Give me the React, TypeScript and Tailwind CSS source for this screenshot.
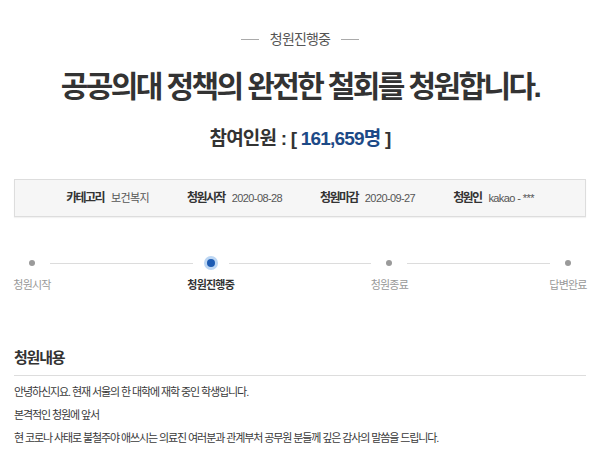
import React from 'react'

const steps = [
  { label: '청원시작', active: false },
  { label: '청원진행중', active: true },
  { label: '청원종료', active: false },
  { label: '답변완료', active: false },
]

const meta = [
  { k: '카테고리', v: '보건복지' },
  { k: '청원시작', v: '2020-08-28' },
  { k: '청원마감', v: '2020-09-27' },
  { k: '청원인', v: 'kakao - ***' },
]

const lines = [
  '안녕하신지요. 현재 서울의 한 대학에 재학 중인 학생입니다.',
  '본격적인 청원에 앞서',
  '현 코로나 사태로 불철주야 애쓰시는 의료진 여러분과 관계부처 공무원 분들께 깊은 감사의 말씀을 드립니다.',
]

function Dot({ active }: { active: boolean }) {
  if (active) {
    return (
      <div className="flex h-[14px] w-[14px] items-center justify-center rounded-full bg-[#bcd6f3]">
        <div className="h-[8px] w-[8px] rounded-full bg-[#1e5cb3]" />
      </div>
    )
  }
  return <div className="h-[6px] w-[6px] rounded-full bg-[#9a9a9a]" />
}

export default function App() {
  return (
    <div
      className="min-h-[449px] w-full bg-white px-[14px] text-[#333]"
      style={{ fontFamily: '"Liberation Sans", "Noto Sans CJK KR", sans-serif' }}
    >
      {/* status label */}
      <div className="flex items-center justify-center gap-[11px] pt-[29px]">
        <span className="h-px w-[18px] bg-[#aaa]" />
        <span className="text-[14px] leading-[20px] tracking-[-0.8px] text-[#555]">청원진행중</span>
        <span className="h-px w-[18px] bg-[#aaa]" />
      </div>

      <h1 className="mt-[20px] text-center text-[30px] font-bold leading-[36px] tracking-[-2.6px] text-[#333]">
        공공의대 정책의 완전한 철회를 청원합니다.
      </h1>

      <div className="mt-[21px] text-center text-[19px] font-bold leading-[26px] tracking-[-0.8px] text-[#333]">
        참여인원 : [ <span className="text-[#1d4a87]">161,659명</span> ]
      </div>

      {/* meta box */}
      <div className="mt-[27px] flex h-[38px] items-center justify-center gap-[38px] border border-[#dddddd] bg-[#f6f6f6] shadow-[0_1px_1px_rgba(0,0,0,0.05)]">
        {meta.map(m => (
          <div key={m.k} className="flex items-center gap-[7px] leading-[16px]">
            <span className="text-[12px] font-bold tracking-[-1.6px] text-[#333]">{m.k}</span>
            <span className="text-[11px] tracking-[-0.6px] text-[#555]">{m.v}</span>
          </div>
        ))}
      </div>

      {/* progress */}
      <div className="mt-[39px] flex h-[14px] items-center">
        {steps.map((s, i) => (
          <React.Fragment key={s.label}>
            <div className="flex w-[36px] justify-center">
              <Dot active={s.active} />
            </div>
            {i < steps.length - 1 && <div className="h-px flex-1 bg-[#dcdcdc]" />}
          </React.Fragment>
        ))}
      </div>
      <div className="mt-[7px] flex justify-between">
        {steps.map(s => (
          <div key={s.label} className="flex w-[36px] justify-center">
            <span
              className={`whitespace-nowrap text-[11px] leading-[16px] tracking-[-0.8px] ${s.active ? 'font-bold text-[#333]' : 'text-[#999]'}`}
            >
              {s.label}
            </span>
          </div>
        ))}
      </div>

      {/* content */}
      <h2 className="mt-[54px] border-b border-[#dddddd] pb-[6px] text-[15px] font-bold leading-[22px] tracking-[-1.2px] text-[#333]">
        청원내용
      </h2>
      <div className="pt-[5px]">
        {lines.map(l => (
          <p key={l} className="text-[11px] leading-[23px] tracking-[-1.1px] text-[#3a3a3a]">
            {l}
          </p>
        ))}
      </div>
    </div>
  )
}
